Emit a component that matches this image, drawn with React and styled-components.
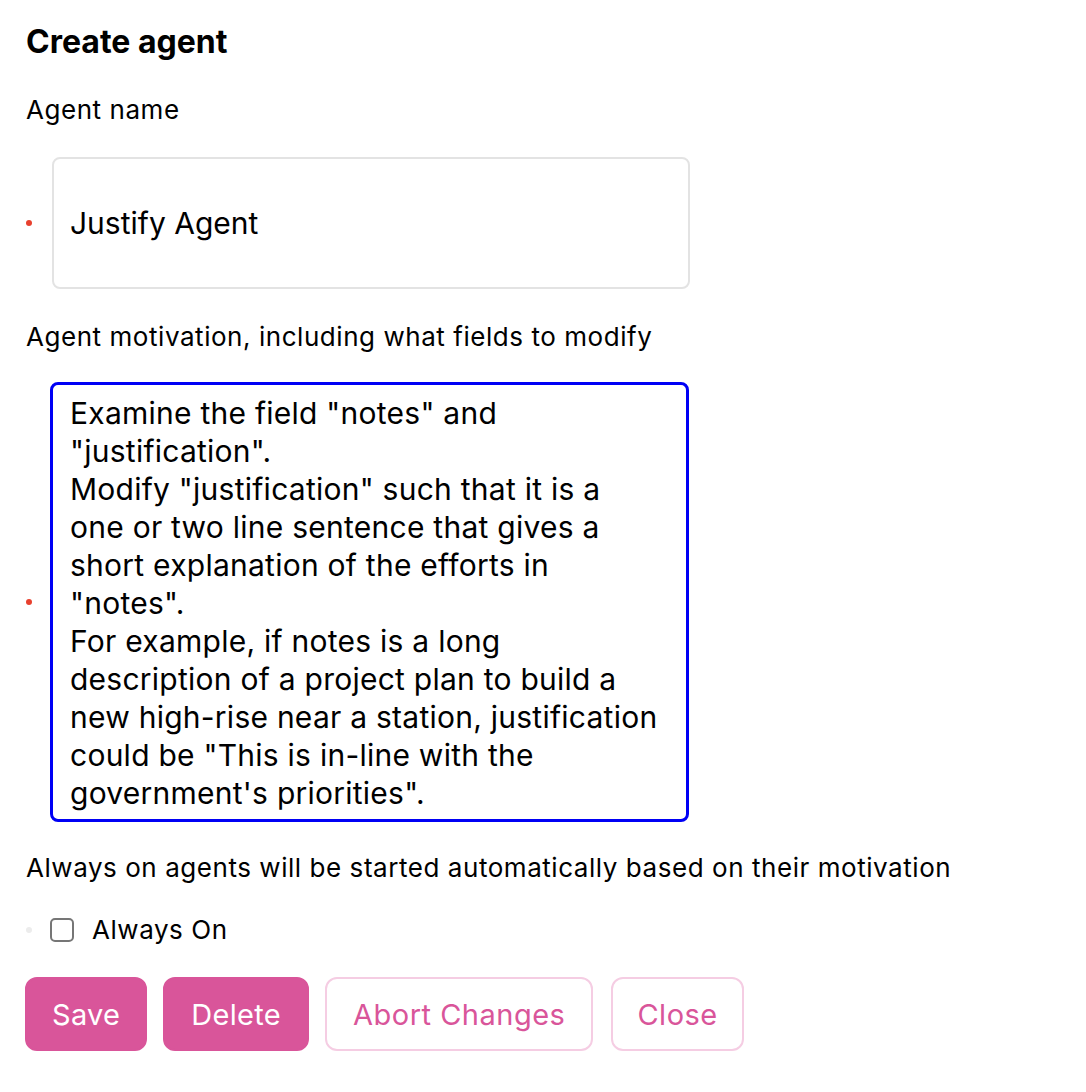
import React from "react";
import styled, { createGlobalStyle } from "styled-components";

const GlobalStyle = createGlobalStyle`
  body {
    margin: 0;
    background: #ffffff;
    font-family: Inter, "Noto Sans", sans-serif;
    color: #000000;
  }
`;

const Page = styled.div`
  display: flex;
  flex-direction: column;
  padding: 24px 26px 24px 25px;
`;

const Title = styled.h2`
  margin: 0 0 0 1px;
  font-size: 32px;
  line-height: 36px;
  font-weight: 700;
`;

const Label = styled.div`
  font-size: 26px;
  line-height: 30px;
  letter-spacing: 0.55px;
  margin-top: ${(p) => p.top}px;
  margin-left: 1px;
`;

const FieldRow = styled.div`
  display: flex;
  align-items: center;
  margin-top: ${(p) => p.top}px;
  margin-left: 1px;
`;

const Dot = styled.span`
  width: 6px;
  height: 6px;
  border-radius: 50%;
  flex-shrink: 0;
  background: ${(p) => (p.muted ? "#ececec" : "#e8402e")};
  margin-right: ${(p) => p.gap}px;
`;

const NameInput = styled.input`
  box-sizing: border-box;
  width: 638px;
  height: 132px;
  border: 2px solid #e3e3e3;
  border-radius: 8px;
  padding: 0 16px;
  font-family: Inter, "Noto Sans", sans-serif;
  font-size: 30px;
  color: #000;
  outline: none;
`;

const MotivationArea = styled.textarea`
  box-sizing: border-box;
  width: 639px;
  height: 440px;
  border: 3px solid #0000f5;
  border-radius: 8px;
  padding: 9px 4px 7px 17px;
  font-family: Inter, "Noto Sans", sans-serif;
  font-size: 30px;
  line-height: 38px;
  letter-spacing: 0.25px;
  color: #000;
  caret-color: #000;
  resize: none;
  outline: none;
  white-space: pre;
  overflow: hidden;
`;

const Checkbox = styled.span`
  box-sizing: border-box;
  width: 24px;
  height: 24px;
  border: 2px solid #767676;
  border-radius: 5px;
  margin-right: 18px;
  flex-shrink: 0;
`;

const CheckText = styled.span`
  font-size: 26px;
  line-height: 30px;
  letter-spacing: 0.55px;
`;

const Actions = styled.div`
  display: flex;
  gap: 16px;
  margin-top: 32px;
`;

const Button = styled.button`
  box-sizing: border-box;
  height: 74px;
  padding: 0 ${(p) => p.pad}px;
  margin-left: ${(p) => (p.spaced ? 2 : 0)}px;
  border-radius: 12px;
  font-family: Inter, "Noto Sans", sans-serif;
  font-size: 29px;
  letter-spacing: ${(p) => (p.outline ? 0.5 : 0.3)}px;
  cursor: pointer;
  background: ${(p) => (p.outline ? "#ffffff" : "#d9559a")};
  color: ${(p) => (p.outline ? "#d9559a" : "#ffffff")};
  border: 2px solid ${(p) => (p.outline ? "#f5cde3" : "#d9559a")};
`;

const motivation = [
  'Examine the field "notes" and',
  '"justification".',
  'Modify "justification" such that it is a',
  "one or two line sentence that gives a",
  "short explanation of the efforts in",
  '"notes".',
  "For example, if notes is a long",
  "description of a project plan to build a",
  "new high-rise near a station, justification",
  'could be "This is in-line with the',
  "government's priorities\".",
].join("\n");

const App = () => {
  const placeCaret = (e) => {
    const end = e.target.value.length;
    e.target.setSelectionRange(end, end);
  };

  return (
    <>
      <GlobalStyle />
      <Page>
        <Title>Create agent</Title>
        <Label top={35}>Agent name</Label>
        <FieldRow top={32}>
          <Dot gap={20} />
          <NameInput defaultValue="Justify Agent" />
        </FieldRow>
        <Label top={33}>Agent motivation, including what fields to modify</Label>
        <FieldRow top={30}>
          <Dot gap={18} />
          <MotivationArea
            defaultValue={motivation}
            spellCheck={false}
            autoFocus
            onFocus={placeCaret}
          />
        </FieldRow>
        <Label top={31}>
          Always on agents will be started automatically based on their motivation
        </Label>
        <FieldRow top={32}>
          <Dot muted gap={18} />
          <Checkbox />
          <CheckText>Always On</CheckText>
        </FieldRow>
        <Actions>
          <Button pad={25}>Save</Button>
          <Button pad={26}>Delete</Button>
          <Button outline pad={26}>Abort Changes</Button>
          <Button outline spaced pad={24}>Close</Button>
        </Actions>
      </Page>
    </>
  );
};

export default App;
